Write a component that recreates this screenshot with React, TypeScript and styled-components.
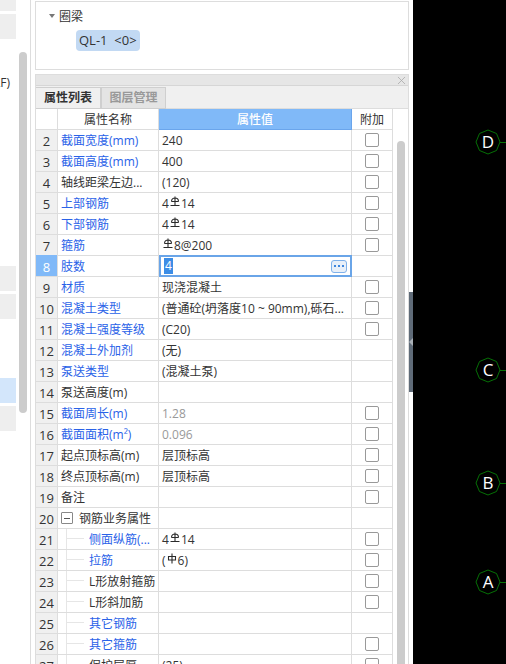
import React from "react";
import styled, { createGlobalStyle } from "styled-components";
import { X } from "lucide-react";

const GlobalStyle = createGlobalStyle`
  html, body {
    margin: 0;
    padding: 0;
    height: 664px;
    overflow: hidden;
    background: #fff;
  }
  body {
    font-family: "Open Sans", "Noto Sans CJK SC", sans-serif;
    font-size: 12px;
    color: #333;
  }
`;

const Page = styled.div`
  display: flex;
  width: 506px;
  height: 664px;
  overflow: hidden;
`;

const Rail = styled.div`
  box-sizing: border-box;
  display: flex;
  flex: none;
  width: 31px;
  height: 664px;
  border-right: 1px solid #ddd;
`;

const RailList = styled.div`
  display: flex;
  flex-direction: column;
  gap: 3px;
  width: 16px;
  margin-top: -14px;
`;

const RailItem = styled.div<{ $tone?: "plain" | "grey" | "blue" }>`
  box-sizing: border-box;
  display: flex;
  flex: none;
  justify-content: flex-end;
  height: 25px;
  padding-right: 6px;
  line-height: 25px;
  white-space: nowrap;
  overflow: hidden;
  background: ${(p) =>
    p.$tone === "grey" ? "#eeeeee" : p.$tone === "blue" ? "#d3e6fb" : "transparent"};
`;

const RailText = styled.span`
  flex: none;
`;

const RailThumb = styled.div`
  flex: none;
  width: 8px;
  height: 361px;
  margin: 52px 0 0 3px;
  border-radius: 4px;
  background: #cccccc;
`;

const Panels = styled.div`
  display: flex;
  flex: none;
  flex-direction: column;
  width: 374px;
  margin-left: 4px;
`;

const TreePanel = styled.div`
  box-sizing: border-box;
  flex: none;
  height: 69px;
  margin: 1px 0 4px;
  padding: 5px 0 0 13px;
  border: 1px solid #ddd;
`;

const TreeRoot = styled.div`
  display: flex;
  align-items: center;
  gap: 4px;
  height: 18px;
`;

const TreeCaret = styled.span`
  width: 0;
  height: 0;
  border-style: solid;
  border-width: 4px 3.5px 0;
  border-color: #777 transparent transparent;
`;

const TreeChip = styled.div`
  display: inline-block;
  margin: 5px 0 0 27px;
  padding: 0 3px;
  width: 58px;
  height: 21px;
  line-height: 20px;
  border-radius: 4px;
  background: #c2d9f3;
  font-size: 13px;
  white-space: pre;
`;

const PropsPanel = styled.div`
  display: flex;
  flex: 1;
  flex-direction: column;
  min-height: 0;
  border-left: 1px solid #ddd;
  border-right: 1px solid #ddd;
`;

const TitleBar = styled.div`
  box-sizing: border-box;
  display: flex;
  flex: none;
  align-items: center;
  justify-content: flex-end;
  height: 12px;
  background: #e6e6e6;
  border-top: 1px solid #ddd;
  border-bottom: 1px solid #d6d6d6;
  color: #aaa;
`;

const TabStrip = styled.div`
  box-sizing: border-box;
  display: flex;
  flex: none;
  height: 23px;
  padding-top: 1px;
  background: #f0f0f0;
  border-bottom: 1px solid #ddd;
`;

const Tab = styled.div<{ $active?: boolean }>`
  box-sizing: border-box;
  width: 65px;
  height: 22px;
  line-height: 20px;
  text-align: center;
  font-weight: 700;
  font-size: 12px;
  color: ${(p) => (p.$active ? "#333" : "#999")};
  background: ${(p) => (p.$active ? "#f0f0f0" : "#e4e4e4")};
  border: 1px solid #cfcfcf;
  border-left: ${(p) => (p.$active ? "none" : "1px solid #cfcfcf")};
`;

const TableArea = styled.div`
  display: flex;
  flex: 1;
  min-height: 0;
`;

const Rows = styled.div`
  flex: none;
  width: 357px;
`;

const Gutter = styled.div`
  flex: none;
  width: 15px;
  padding: 32px 0 0 4px;
  box-sizing: border-box;
`;

const GutterThumb = styled.div`
  width: 8px;
  height: 600px;
  border-radius: 4px 4px 0 0;
  background: #cccccc;
`;

const Row = styled.div`
  display: grid;
  grid-template-columns: 22px 101px 193px 41px;
  height: 21px;
`;

const Cell = styled.div`
  box-sizing: border-box;
  height: 21px;
  padding-top: 2px;
  line-height: 18px;
  border-right: 1px solid #ddd;
  border-bottom: 1px solid #ddd;
  white-space: nowrap;
  overflow: hidden;
`;

const HeadCell = styled(Cell)<{ $active?: boolean }>`
  text-align: center;
  color: ${(p) => (p.$active ? "#fff" : "#333")};
  background: ${(p) => (p.$active ? "#80b9f8" : "#fff")};
  border-color: ${(p) => (p.$active ? "#6aa5ec" : "#ddd")};
  font-weight: ${(p) => (p.$active ? 500 : 400)};
`;

const IndexCell = styled(Cell)<{ $active?: boolean }>`
  text-align: center;
  font-size: 13px;
  color: ${(p) => (p.$active ? "#fff" : "#333")};
  background: ${(p) => (p.$active ? "#80b9f8" : "#f0f0f0")};
  ${(p) => p.$active && "height: 22px; margin-top: -1px; padding-top: 3px;"}
`;

const NameCell = styled(Cell)<{ $link?: boolean; $indent?: boolean }>`
  position: relative;
  display: flex;
  align-items: center;
  padding-left: ${(p) => (p.$indent ? "31px" : "3px")};
  color: ${(p) => (p.$link ? "#2a62e8" : "#333")};
`;

const TreeGuide = styled.span`
  position: absolute;
  left: 8px;
  top: 0;
  bottom: -1px;
  width: 17px;
  border-left: 1px solid #e6e6e6;
  &::after {
    content: "";
    position: absolute;
    left: 0;
    right: 0;
    top: 9px;
    border-top: 1px solid #e6e6e6;
  }
`;

const Collapse = styled.span`
  box-sizing: border-box;
  display: flex;
  flex: none;
  align-items: center;
  justify-content: center;
  width: 12px;
  height: 12px;
  margin: -2px 6px 0 0;
  border: 1px solid #888;
  border-radius: 1px;
  &::before {
    content: "";
    width: 6px;
    border-top: 1px solid #555;
  }
`;

const ValueCell = styled(Cell)<{ $muted?: boolean }>`
  display: flex;
  align-items: center;
  padding-left: 3px;
  color: ${(p) => (p.$muted ? "#999" : "#333")};
`;

const EditCell = styled.div`
  box-sizing: border-box;
  display: flex;
  align-items: center;
  justify-content: space-between;
  height: 22px;
  margin-top: -1px;
  padding: 0 3px;
  border: 2px solid #6aa5e8;
`;

const EditText = styled.span`
  height: 16px;
  line-height: 16px;
  padding: 0 1px;
  font-size: 12px;
  color: #fff;
  background: #3c8de6;
`;

const MoreButton = styled.span`
  box-sizing: border-box;
  display: flex;
  align-items: center;
  justify-content: center;
  gap: 2px;
  width: 16px;
  height: 13px;
  border: 1px solid #7fb1ea;
  border-radius: 3px;
  background: #e9f0f9;
`;

const MoreDot = styled.i`
  width: 2px;
  height: 2px;
  background: #3f87de;
`;

const FlagCell = styled(Cell)`
  display: flex;
  align-items: center;
  justify-content: center;
  padding-top: 0;
`;

const Check = styled.span`
  box-sizing: border-box;
  width: 14px;
  height: 14px;
  border: 1px solid #999;
  border-radius: 2px;
  background: #fff;
`;

const Rebar = styled.svg`
  flex: none;
  width: 10px;
  height: 11px;
  margin: -5px 1px 0 1px;
`;

const Splitter = styled.div`
  display: flex;
  flex: none;
  align-items: flex-start;
  width: 4px;
  background: #fff;
`;

const SplitterHandle = styled.div`
  display: flex;
  align-items: center;
  width: 4px;
  height: 100px;
  margin-top: 292px;
  background: #5f6b78;
  &::before {
    content: "";
    border-style: solid;
    border-width: 4px 4px 4px 0;
    border-color: transparent #a9b0b7 transparent transparent;
  }
`;

const Canvas = styled.div`
  position: relative;
  flex: 1;
  background: #000;
`;

const Axis = styled.div<{ $y: number }>`
  position: absolute;
  left: 62px;
  top: ${(p) => p.$y - 13}px;
  display: flex;
  align-items: center;
  justify-content: center;
  width: 26px;
  height: 26px;
  &::after {
    content: "";
    position: absolute;
    left: 25px;
    top: 13px;
    width: 6px;
    border-top: 1px solid #067006;
  }
`;

const AxisShape = styled.svg`
  position: absolute;
  inset: 0;
  width: 26px;
  height: 26px;
`;

const AxisLabel = styled.span`
  position: relative;
  font-family: "Open Sans", sans-serif;
  font-size: 17px;
  line-height: 26px;
  color: #fff;
`;

type Rebars = "C" | "A";

function RebarMark({ type }: { type: Rebars }) {
  return (
    <Rebar viewBox="0 0 10 11" fill="none" stroke="#2a2a2a" strokeWidth="1.1">
      {type === "C" ? (
        <path d="M5 0.5V9.5M0.5 9.5H9.5M1.5 5.5H8.5M1.5 5.5C1.5 3 3 2 5 2S8.5 3 8.5 5.5" />
      ) : (
        <path d="M5 0.5V10.5M1.5 3.5H8.5V7H1.5Z" />
      )}
    </Rebar>
  );
}

type Prop = {
  no: number;
  name: string;
  value?: React.ReactNode;
  link?: boolean;
  check?: boolean;
  muted?: boolean;
  indent?: boolean;
  group?: boolean;
  editing?: boolean;
};

const bar = (count: string, dia: string) => (
  <>
    {count}
    <RebarMark type="C" />
    {dia}
  </>
);

const PROPS: Prop[] = [
  { no: 2, name: "截面宽度(mm)", value: "240", link: true, check: true },
  { no: 3, name: "截面高度(mm)", value: "400", link: true, check: true },
  { no: 4, name: "轴线距梁左边...", value: "(120)", check: true },
  { no: 5, name: "上部钢筋", value: bar("4", "14"), link: true, check: true },
  { no: 6, name: "下部钢筋", value: bar("4", "14"), link: true, check: true },
  { no: 7, name: "箍筋", value: bar("", "8@200"), link: true, check: true },
  { no: 8, name: "肢数", link: true, editing: true },
  { no: 9, name: "材质", value: "现浇混凝土", link: true, check: true },
  { no: 10, name: "混凝土类型", value: "(普通砼(坍落度10 ~ 90mm),砾石...", link: true, check: true },
  { no: 11, name: "混凝土强度等级", value: "(C20)", link: true, check: true },
  { no: 12, name: "混凝土外加剂", value: "(无)", link: true },
  { no: 13, name: "泵送类型", value: "(混凝土泵)", link: true },
  { no: 14, name: "泵送高度(m)" },
  { no: 15, name: "截面周长(m)", value: "1.28", link: true, check: true, muted: true },
  { no: 16, name: "截面面积(m²)", value: "0.096", link: true, check: true, muted: true },
  { no: 17, name: "起点顶标高(m)", value: "层顶标高", check: true },
  { no: 18, name: "终点顶标高(m)", value: "层顶标高", check: true },
  { no: 19, name: "备注", check: true },
  { no: 20, name: "钢筋业务属性", group: true },
  { no: 21, name: "侧面纵筋(...", value: bar("4", "14"), link: true, check: true, indent: true },
  {
    no: 22,
    name: "拉筋",
    value: (
      <>
        (<RebarMark type="A" />
        6)
      </>
    ),
    link: true,
    check: true,
    indent: true,
  },
  { no: 23, name: "L形放射箍筋", check: true, indent: true },
  { no: 24, name: "L形斜加筋", check: true, indent: true },
  { no: 25, name: "其它钢筋", link: true, indent: true },
  { no: 26, name: "其它箍筋", link: true, check: true, indent: true },
  { no: 27, name: "保护层厚...", value: "(25)", check: true, indent: true },
];

const RAIL: { tone: "plain" | "grey" | "blue"; text?: string }[] = [
  { tone: "grey" },
  { tone: "grey" },
  { tone: "plain" },
  { tone: "plain", text: "(LF)" },
  { tone: "plain" },
  { tone: "plain" },
  { tone: "plain" },
  { tone: "plain" },
  { tone: "plain" },
  { tone: "plain" },
  { tone: "grey" },
  { tone: "grey" },
  { tone: "plain" },
  { tone: "plain" },
  { tone: "blue" },
  { tone: "grey" },
];

const AXES = [
  { label: "D", y: 142 },
  { label: "C", y: 370 },
  { label: "B", y: 483 },
  { label: "A", y: 582 },
];

export default function App() {
  return (
    <Page>
      <GlobalStyle />
      <Rail>
        <RailList>
          {RAIL.map((item, i) => (
            <RailItem key={i} $tone={item.tone}>
              {item.text && <RailText>{item.text}</RailText>}
            </RailItem>
          ))}
        </RailList>
        <RailThumb />
      </Rail>
      <Panels>
        <TreePanel>
          <TreeRoot>
            <TreeCaret />
            圈梁
          </TreeRoot>
          <TreeChip>QL-1  &lt;0&gt;</TreeChip>
        </TreePanel>
        <PropsPanel>
          <TitleBar>
            <X size={13} strokeWidth={1.5} />
          </TitleBar>
          <TabStrip>
            <Tab $active>属性列表</Tab>
            <Tab>图层管理</Tab>
          </TabStrip>
          <TableArea>
            <Rows>
              <Row>
                <HeadCell />
                <HeadCell>属性名称</HeadCell>
                <HeadCell $active>属性值</HeadCell>
                <HeadCell>附加</HeadCell>
              </Row>
              {PROPS.map((p) => (
                <Row key={p.no}>
                  <IndexCell $active={p.editing}>{p.no}</IndexCell>
                  <NameCell $link={p.link} $indent={p.indent}>
                    {p.indent && <TreeGuide />}
                    {p.group && <Collapse />}
                    {p.name}
                  </NameCell>
                  {p.editing ? (
                    <EditCell>
                      <EditText>4</EditText>
                      <MoreButton>
                        <MoreDot />
                        <MoreDot />
                        <MoreDot />
                      </MoreButton>
                    </EditCell>
                  ) : (
                    <ValueCell $muted={p.muted}>{p.value}</ValueCell>
                  )}
                  <FlagCell>{p.check && <Check />}</FlagCell>
                </Row>
              ))}
            </Rows>
            <Gutter>
              <GutterThumb />
            </Gutter>
          </TableArea>
        </PropsPanel>
      </Panels>
      <Splitter>
        <SplitterHandle />
      </Splitter>
      <Canvas>
        {AXES.map((a) => (
          <Axis key={a.label} $y={a.y}>
            <AxisShape viewBox="0 0 26 26" fill="none" stroke="#067006" strokeWidth="1">
              <polygon points="13,1 21.5,4.5 25,13 21.5,21.5 13,25 4.5,21.5 1,13 4.5,4.5" />
            </AxisShape>
            <AxisLabel>{a.label}</AxisLabel>
          </Axis>
        ))}
      </Canvas>
    </Page>
  );
}
